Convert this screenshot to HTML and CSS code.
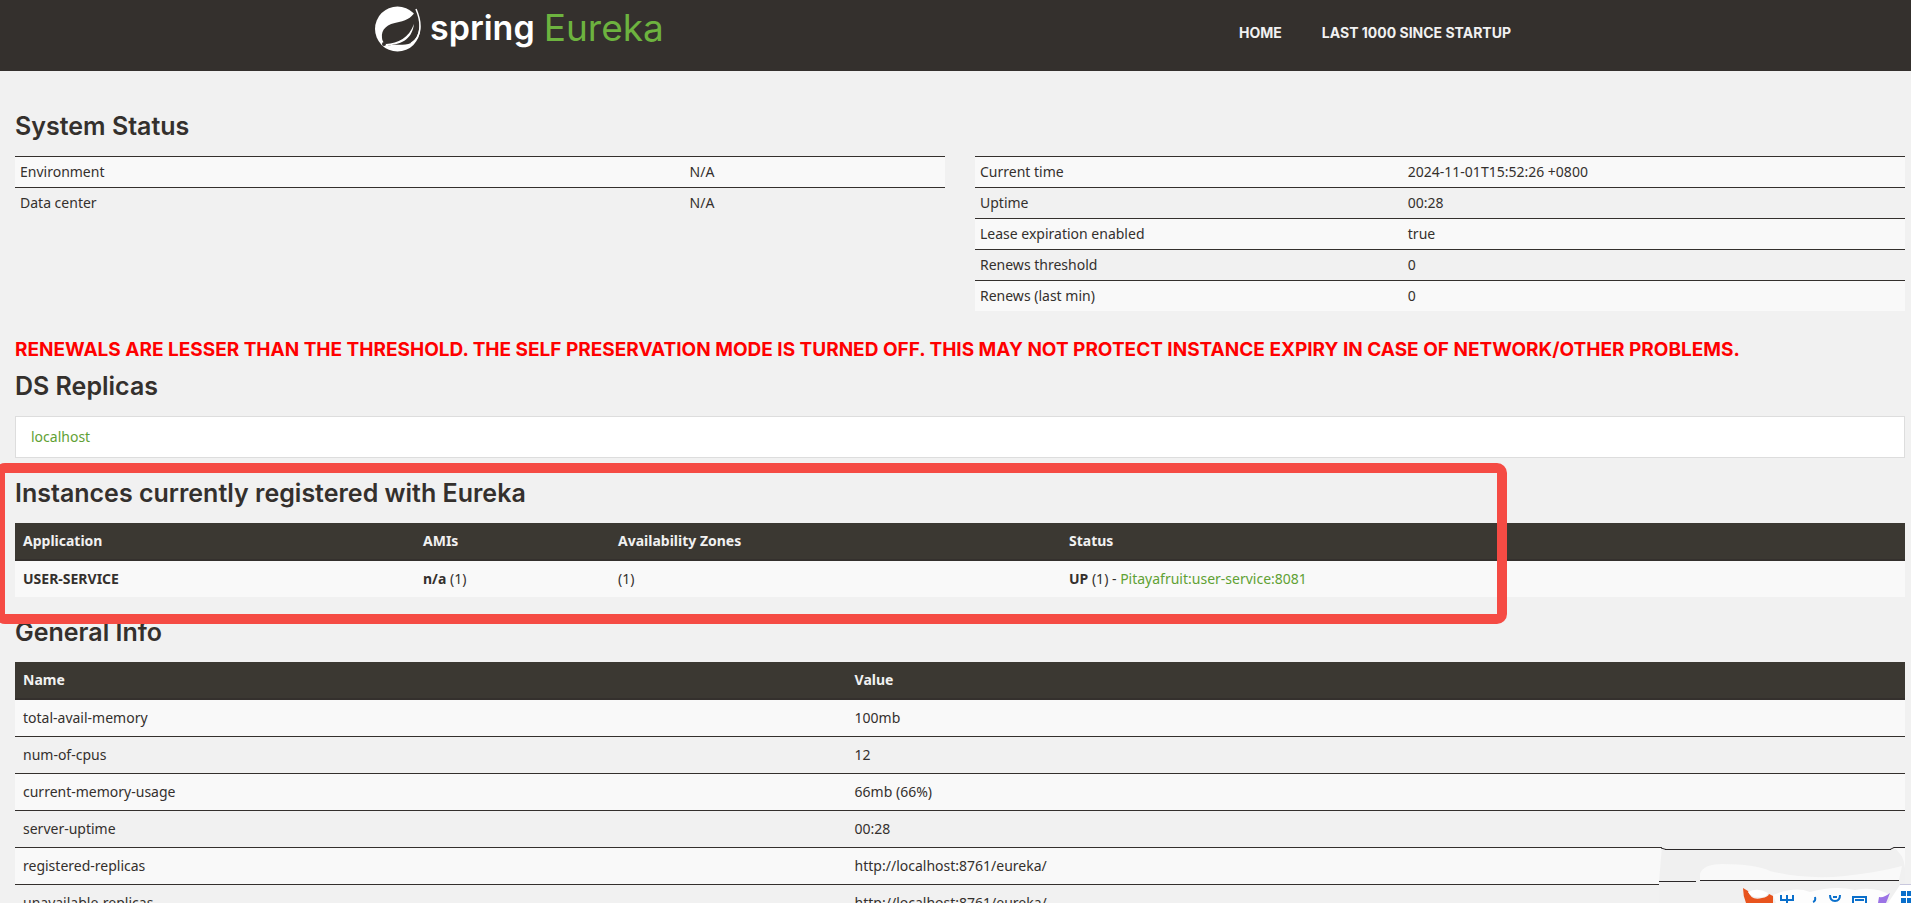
FILE: index.html
```
<!DOCTYPE html>
<html lang="en">
  <head>
    <meta charset="utf-8">
    <title>Eureka</title>
    <link rel="stylesheet" href="styles.css">
  </head>
  <body>
    <nav class="navbar">
      <div class="container">
        <a class="brand" href="#">
          <svg class="leaf" viewBox="0 0 46 46" aria-hidden="true">
            <circle cx="22.500" cy="23" r="22.500" fill="#fff"/>
            <path d="M41 3C38 11 33 14 24 16C12 18 6 23 7 32C7 35 9 37 11 38C23 37 34 32 39 18C37 32 29 38 12 39.500C20 38 29 40 36 37C46 31 46 16 41 3Z" fill="#34302d"/>
            <path d="M41 3C47 17 47 31 36 37.500" fill="none" stroke="#fff" stroke-width="1.500"/>
            <circle cx="9" cy="38" r="2" fill="#34302d"/>
          </svg>
          <span class="brand-spring">spring</span>
          <span class="brand-eureka">Eureka</span>
        </a>
        <ul class="nav">
          <li><a href="#">Home</a></li>
          <li><a href="#">Last 1000 since startup</a></li>
        </ul>
      </div>
    </nav>

    <div class="content">
      <h1>System Status</h1>
      <div class="row">
        <table class="table condensed instance">
          <tr><td>Environment</td><td>N/A</td></tr>
          <tr><td>Data center</td><td>N/A</td></tr>
        </table>
        <table class="table condensed status">
          <tr><td>Current time</td><td>2024-11-01T15:52:26 +0800</td></tr>
          <tr><td>Uptime</td><td>00:28</td></tr>
          <tr><td>Lease expiration enabled</td><td>true</td></tr>
          <tr><td>Renews threshold</td><td>0</td></tr>
          <tr><td>Renews (last min)</td><td>0</td></tr>
        </table>
      </div>

      <h4>RENEWALS ARE LESSER THAN THE THRESHOLD. THE SELF PRESERVATION MODE IS TURNED OFF. THIS MAY NOT PROTECT INSTANCE EXPIRY IN CASE OF NETWORK/OTHER PROBLEMS.</h4>

      <h1>DS Replicas</h1>
      <ul class="list-group">
        <li><a href="#">localhost</a></li>
      </ul>

      <div class="registered">
        <h1>Instances currently registered with Eureka</h1>
        <table class="table apps">
          <thead>
            <tr><th>Application</th><th>AMIs</th><th>Availability Zones</th><th>Status</th></tr>
          </thead>
          <tbody>
            <tr>
              <td><b>USER-SERVICE</b></td>
              <td><b>n/a</b> (1)</td>
              <td>(1)</td>
              <td><b>UP</b> (1) - <a href="#">Pitayafruit:user-service:8081</a></td>
            </tr>
          </tbody>
        </table>
        <div class="marker"></div>
      </div>

      <h1>General Info</h1>
      <table class="table general">
        <thead>
          <tr><th>Name</th><th>Value</th></tr>
        </thead>
        <tbody>
          <tr><td>total-avail-memory</td><td>100mb</td></tr>
          <tr><td>num-of-cpus</td><td>12</td></tr>
          <tr><td>current-memory-usage</td><td>66mb (66%)</td></tr>
          <tr><td>server-uptime</td><td>00:28</td></tr>
          <tr><td>registered-replicas</td><td>http://localhost:8761/eureka/</td></tr>
          <tr><td>unavailable-replicas</td><td>http://localhost:8761/eureka/</td></tr>
        </tbody>
      </table>
    </div>

    <!-- input method bar peeking in at the bottom right -->
    <svg class="ime" viewBox="0 0 281 83" aria-hidden="true">
      <path d="M32 26H262Q274 34 275 48V83H29V62Z" fill="#f0f0f0"/>
      <path d="M70 60V54Q73 44 92 44Q125 44 140 51Q175 60 215 56Q250 52 272 46L269 60Z" fill="#f9f9f9"/>
      <path d="M29 61.500H66M70 60.500H269M35 29.500H261" fill="none" stroke="#2b2829"/>
      <path d="M31 28L36 29.500M260 29.500L264 27.500H275" fill="none" stroke="#2b2829"/>
      <path d="M143 75Q165 66 180 72Q205 65 225 70Q245 66 260 75L250 83H146Z" fill="#fdfdfd"/>
      <path d="M270 65H281V83H258Z" fill="#fff"/>
      <path d="M270 64.500H281" stroke="#c9c8dd"/>
      <path d="M113 68L118 71Q121 81 132 78Q138 77 139 74L143 76V83H116Q113 76 113 68Z" fill="#e8541e"/>
      <path d="M118 72Q128 67 138 73Q137 78 127 77Q121 77 118 72Z" fill="#fff"/>
      <g fill="none" stroke="#0a6fcb" stroke-width="2">
        <path d="M151 75V80H163V75M157 75V83"/>
        <path d="M185 77Q186 81 183 82"/>
        <path d="M200 75Q200 81 205 81Q210 81 210 75M203 77H207"/>
        <path d="M223 83V77H236V83M225 80H234"/>
      </g>
      <path d="M249 77Q254 78 260 73L256 83H248Z" fill="#9b73e5"/>
      <g fill="#0a6fcb">
        <rect x="271" y="71" width="5" height="5"/>
        <rect x="277" y="71" width="4" height="5"/>
        <rect x="271" y="78" width="5" height="5"/>
        <rect x="277" y="78" width="4" height="5"/>
      </g>
    </svg>
  </body>
</html>
```

FILE: styles.css
```
* {
  box-sizing: border-box;
}

body {
  position: relative;
  height: 100vh;
  margin: 0;
  overflow: hidden;
  background: #f1f1f1;
  color: #34302d;
  font: 14px/20px "Noto Sans", "Open Sans", sans-serif;
}

a {color: #5fa134; text-decoration: none;}
ul {margin: 0; padding: 0; list-style: none;}

.navbar {height: 71px; padding-left: 9px; background: #34302d;}
.container {display: flex; justify-content: space-between; max-width: 1170px; margin: 0 auto;}
.brand {display: flex; align-items: flex-start; padding-top: 6px;}
.leaf {width: 46px; height: 46px; margin-right: 9px;}
.brand-spring {margin-right: 9px; color: #fff; font: 600 34px/44px Inter, sans-serif;}
.brand-eureka {color: #6db33f; font: 37px/44px Inter, sans-serif;}
.nav {display: flex; gap: 40px; padding: 23px 34px 0 0;}
.nav a {color: #f1f1f1; font: bold 14px/20px Inter, sans-serif; text-transform: uppercase;}

.content {padding: 40px 6px 0 15px;}
h1 {margin: 0 0 15px; font: 600 25px/30px Inter, sans-serif;}
h4 {margin: 29px 0 11px; color: #f00; font: bold 19px/20px Inter, sans-serif; white-space: nowrap;}

.row {display: grid; grid-template-columns: 1fr 1fr; align-items: start; gap: 30px;}

.table {width: 100%; border-spacing: 0; table-layout: fixed;}
.table th {padding: 8px; border-bottom: 2px solid #34302d; background: #3b3832; color: #f1f1f1; text-align: left;}
.table td {padding: 8px; border-top: 1px solid #34302d;}
.table thead + tbody tr:first-child td {border-top: 0;}
.table tr:nth-child(odd) td {background: #f9f9f9;}
.condensed td {padding: 5px;}

.instance td:first-child {width: 72%;}
.status td:first-child {width: 46%;}
.apps th:nth-child(1) {width: 400px;}
.apps th:nth-child(2) {width: 195px;}
.apps th:nth-child(3) {width: 451px;}
.general th:first-child {width: 44%;}

.list-group {margin-bottom: 20px;}
.list-group li {padding: 10px 15px; border: 1px solid #ddd; background: #fff;}

.registered {position: relative; margin-bottom: 20px;}
.marker {position: absolute; top: -15px; left: -20px; width: 80%; height: 161px; border: 10px solid #f54b44; border-radius: 10px;}

.ime {position: absolute; right: 0; bottom: 0; width: 281px; height: 83px;}
```
